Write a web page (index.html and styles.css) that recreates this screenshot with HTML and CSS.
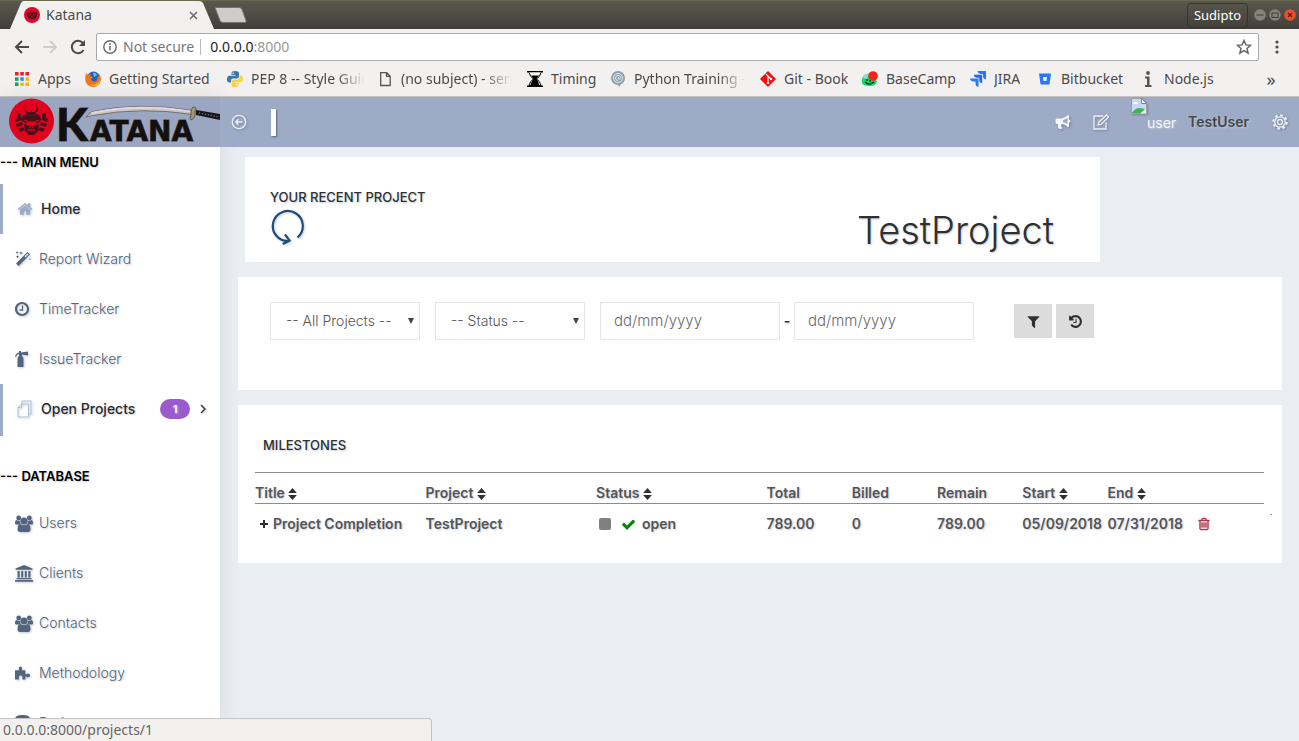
FILE: index.html
```html
<!DOCTYPE html>
<html lang="en">
<head>
<meta charset="utf-8">
<title>Katana</title>
<link rel="stylesheet" href="styles.css">
</head>
<body>
<svg class="defs" aria-hidden="true">
  <defs>
    <symbol id="sort" viewBox="0 0 8 11"><path d="M4 0 8 4.500H0zM0 6.500h8L4 11z"/></symbol>
    <symbol id="users" viewBox="0 0 18 17"><circle cx="3.700" cy="3" r="2.400"/><circle cx="14.300" cy="3" r="2.400"/><path d="M0 8.500Q0 5 1.500 5q2 1.500 4 .8Q4.500 8 6 9.600H1.500Q0 9.600 0 8.500zM18 8.500Q18 5 16.500 5q-2 1.500-4 .8Q13.500 8 12 9.600h4.500q1.500 0 1.500-1.100z"/><circle cx="9" cy="6" r="3.500"/><path d="M5.500 9q3.500 2.600 7 0 3 .6 3 5 0 3-2.500 3H5q-2.500 0-2.500-3 0-4.400 3-5z"/></symbol>
  </defs>
</svg>

<header class="browser">
  <div class="tabstrip">
    <div class="tab">
      <svg class="tab-shape" viewBox="0 0 206 28" preserveAspectRatio="none"><path d="M0 28L11 2q1-2 3-2h175q3 0 4 2l11 26z" fill="#f2f1f0"/></svg>
      <svg class="favicon" viewBox="0 0 16 16"><circle cx="8" cy="8" r="8" fill="#e2062c"/><path d="M3 5l2 1 1-2 2 2 2-2 1 2 2-1v4l-2 3H5L3 9z" fill="#5a1020"/><path d="M5 8h2M9 8h2M7 10h2" stroke="#e2062c"/></svg>
      <span class="tab-title">Katana</span>
      <button class="tab-close" aria-label="Close tab"><svg viewBox="0 0 9 9"><path d="M1 1l7 7M8 1 1 8" stroke="#6b6b6b" stroke-width="1.500"/></svg></button>
    </div>
    <button class="newtab" aria-label="New tab"><svg viewBox="0 0 33 16"><path d="M1 .5h24q2 0 3 2l4 11q.5 2-1 2H9q-2 0-3-2z" fill="#cdcccb" stroke="#76756f"/></svg></button>
    <div class="window-tools">
      <button class="profile">Sudipto</button>
      <svg class="winbtn" viewBox="0 0 12 12"><circle cx="6" cy="6" r="5.800" fill="#85837b"/><path d="M2.500 6h7" stroke="#3d3c37"/></svg>
      <svg class="winbtn" viewBox="0 0 12 12"><circle cx="6" cy="6" r="5.800" fill="#85837b"/><rect x="3" y="4" width="6" height="4.500" fill="none" stroke="#3d3c37"/></svg>
      <svg class="winbtn" viewBox="0 0 12 12"><circle cx="6" cy="6" r="5.800" fill="#ef5029"/><path d="M4 4l4 4M8 4l-4 4" stroke="#54200f" stroke-width="1.200"/></svg>
    </div>
  </div>
  <div class="toolbar">
    <button aria-label="Back"><svg viewBox="0 0 16 16"><path d="M15 8H2M8 2 2 8l6 6" fill="none" stroke="#4b4b4b" stroke-width="2"/></svg></button>
    <button aria-label="Forward"><svg viewBox="0 0 16 16"><path d="M1 8h13M8 2l6 6-6 6" fill="none" stroke="#cfcecd" stroke-width="2"/></svg></button>
    <button aria-label="Reload"><svg viewBox="0 0 16 16"><path d="M13.500 11A6.200 6.200 0 1 1 12.800 4" fill="none" stroke="#4b4b4b" stroke-width="2"/><path d="M15 1v6H9z" fill="#4b4b4b"/></svg></button>
    <div class="address">
      <svg viewBox="0 0 14 14"><circle cx="7" cy="7" r="6.200" fill="none" stroke="#666" stroke-width="1.400"/><path d="M7 6v4.500M7 3.300v1.600" stroke="#666" stroke-width="1.500"/></svg>
      <span class="secure">Not secure</span>
      <span class="url">0.0.0.0<em>:8000</em></span>
      <svg class="star" viewBox="0 0 16 16"><path d="M8 1.500l1.900 4.400 4.700.4-3.600 3.100 1.100 4.700L8 11.600l-4.100 2.500L5 9.400 1.400 6.300l4.700-.4z" fill="none" stroke="#666" stroke-width="1.500"/></svg>
    </div>
    <button class="more" aria-label="Menu"><svg viewBox="0 0 16 16"><circle cx="8" cy="3" r="1.600"/><circle cx="8" cy="8" r="1.600"/><circle cx="8" cy="13" r="1.600"/></svg></button>
  </div>
  <nav class="bookmarks">
    <a href="#"><svg viewBox="0 0 16 16"><path d="M1 1h3.500v3.500H1zM6.300 1h3.500v3.500H6.300zM11.500 1H15v3.500h-3.500z" fill="#ea1c24"/><path d="M1 6.300h3.500v3.500H1z" fill="#10a35a"/><path d="M6.300 6.300h3.500v3.500H6.300z" fill="#3b82f6"/><path d="M11.500 6.300H15v3.500h-3.500zM6.300 11.500h3.500V15H6.300zM11.500 11.500H15V15h-3.500z" fill="#f6b80c"/><path d="M1 11.500h3.500V15H1z" fill="#10a35a"/></svg><span>Apps</span></a>
    <a href="#"><svg viewBox="0 0 16 16"><circle cx="8.500" cy="7" r="6.500" fill="#1f64b8"/><path d="M8 2q3-1 4 2L9 6z" fill="#57c4e8"/><path d="M1 2l2 2q1-1 3-1L5 5l3 1-2 2q1 3 4 2.500 3-1 2-4 2 0 2-4 3 4 1.500 8A8 8 0 0 1 8 16 8 8 0 0 1 .3 9Q0 5 1 2z" fill="#f0731e"/><path d="M14 3q3 5-1 9-4 3-9 1 5 4 9 1 4-5 1-11z" fill="#fcc229"/></svg><span>Getting Started</span></a>
    <a href="#"><svg viewBox="0 0 16 16"><path d="M8 0Q4.500 0 4.500 2v2H8.500v.7H2.500Q0 5 0 8.200T2.300 11.500H4V9.500q0-2 2-2h4q2 0 2-2V2Q12 0 8 0z" fill="#3b76a8"/><path d="M8.200 16q3.600 0 3.600-2v-2H7.600v-.7h6Q16 11 16 7.800T13.700 4.500H12.500v2q0 2-2 2h-4q-2 0-2 2V14q0 2 3.700 2z" fill="#ffd33f"/><circle cx="6.200" cy="2.200" r=".8" fill="#fff"/><circle cx="10" cy="13.800" r=".8" fill="#fff"/></svg><span>PEP 8 -- Style Guide</span></a>
    <a href="#"><svg viewBox="0 0 16 16"><path d="M3.700 1.700h6l3.500 3.500v9.300H3.700zM9.500 1.700v3.700h3.700" fill="none" stroke="#555" stroke-width="1.300"/></svg><span>(no subject) - sen</span></a>
    <a href="#"><svg viewBox="0 0 16 16"><path d="M0 0h16v1.500H0zM0 14.500h16V16H0z"/><path d="M2 1.500Q3 6 6.500 8 3 10 2 14.500h12Q13 10 9.500 8 13 6 14 1.500" fill="#fff" stroke="#000"/><path d="M4 4.500h8L9.500 8q2 1.500 2.500 6H3.500Q5 9 6.500 8z"/></svg><span>Timing</span></a>
    <a href="#"><svg viewBox="0 0 16 16"><path d="M8 0a7 7 0 0 1 3 13.300L9 16l-1-2A7 7 0 0 1 8 0z" fill="#8fa5ae"/><circle cx="8" cy="7" r="4.500" fill="none" stroke="#e3eaed"/><path d="M8 9.500A2.500 2.500 0 1 1 10.500 7Q10 9 8.500 8V6" fill="none" stroke="#e3eaed"/></svg><span>Python Training -</span></a>
    <a href="#"><svg viewBox="0 0 16 16"><path d="M8 0l8 8-8 8-8-8z" fill="#f40c0c"/><path d="M6 3l2 2v7M8 5l3 3" fill="none" stroke="#fff" stroke-width="1.200"/><circle cx="8" cy="12" r="1.300" fill="#fff"/><circle cx="11" cy="8" r="1.300" fill="#fff"/></svg><span>Git - Book</span></a>
    <a href="#"><svg viewBox="0 0 16 16"><path d="M0 8q2-6 8-5l7 7q-1 5-7 5-7 0-8-3z" fill="#10d96b"/><path d="M1 7q2-5 6-4L5 8z" fill="#8adfd2"/><circle cx="11" cy="5" r="4.800" fill="#f52418"/><path d="M3 11q4 4 9 0M5 8v2M8 9v2" fill="none" stroke="#09331b" stroke-width="1.300"/></svg><span>BaseCamp</span></a>
    <a href="#"><svg viewBox="0 0 16 16"><path d="M7.500 0H16v8.500Q13 8 13 5V3h-2Q8 3 7.500 0z" fill="#2878ff"/><path d="M3.800 3.800h8.400v8.400q-3-.5-3-3.500V6.800h-2q-3 0-3.400-3z" fill="#2068ed"/><path d="M0 7.500h8.500V16q-3-.5-3-3.500v-2h-2Q.5 10.500 0 7.500z" fill="#2878ff"/></svg><span>JIRA</span></a>
    <a href="#"><svg viewBox="0 0 16 16"><path d="M2 2.500h12l-1.500 11h-9z" fill="#2878ff"/><path d="M6 6h4l-.6 4H6.600z" fill="#fff"/></svg><span>Bitbucket</span></a>
    <a href="#"><svg viewBox="0 0 16 16"><circle cx="8" cy="2" r="1.900" fill="#555"/><path d="M5 5.500H9.500v8.500h2v2H5v-2h2V7.500H5z" fill="#555"/></svg><span>Node.js</span></a>
    <button aria-label="More bookmarks">»</button>
  </nav>
</header>

<div class="app">
  <aside class="side">
    <a class="logo" href="#" aria-label="Katana">
      <svg viewBox="0 0 220 50">
        <circle cx="31.500" cy="24" r="22.500" fill="#e1021f"/>
        <g fill="#4a1119">
          <path d="M26 8q-3 5 1 9l4 2 4-2q5-4 1-10 2 6-2 8h-6q-4-2-2-7z"/>
          <path d="M31.500 14l2 4h-4zM23 18l5-1 3.500 2 4-2 4 1 2 5-4 3-6-2-6 2-5-3z"/>
          <path d="M17 16l4 1v3l-4 2zM46 16l-4 1v3l4 2zM15 22l6-2v3l-5 2zM48 22l-6-2v3l5 2zM16 27l6-2 1 3-6 2zM47 27l-6-2-1 3 6 2zM18 32l5-2 2 3-5 2zM45 32l-5-2-2 3 5 2z"/>
          <path d="M24 27l6 2h3l6-2-1 7-4 4h-5l-4-4z"/>
        </g>
        <path d="M24 23l5 2M39 23l-5 2M28 33h7M30 29v2M33 29v2" stroke="#e1021f" stroke-width="1.300"/>
        <text class="logo-k" x="56" y="44">K</text>
        <text class="logo-rest" x="90" y="44">ATANA</text>
        <path d="M86 20l6-5.500q45-10 101-1v4q-52-8-100 1z" fill="#cdc8b4" stroke="#655e6b" stroke-width=".8"/>
        <path d="M92 15q48-10 101-1v1.500Q140 7 91 17z" fill="#ded7ef"/>
        <path d="M193 10q5 0 2 5 1 6-4 8-2-1 0-5-1-6 2-8z" fill="#9c9877" stroke="#4c4a3c" stroke-width=".8"/>
        <path d="M196 13l24 4v6l-24-5z" fill="#17171b"/>
        <path d="M199 16l20 4" stroke="#8c8f9c" stroke-width="1.200" stroke-dasharray="1 2"/>
      </svg>
    </a>
    <nav class="menu">
      <h2>--- MAIN MENU</h2>
      <a class="item active" href="#"><svg class="pale" viewBox="0 0 1792 1792"><path d="M1472 992v480q0 26-19 45t-45 19h-384v-384h-256v384h-384q-26 0-45-19t-19-45v-480q0-1 .5-3t.5-3l575-474 575 474q1 2 1 6zm223-69l-62 74q-8 9-21 11h-3q-13 0-21-7l-692-577-692 577q-12 8-24 7-13-2-21-11l-62-74q-8-10-7-23.500t11-21.500l719-599q32-26 76-26t76 26l244 204v-195q0-14 9-23t23-9h192q14 0 23 9t9 23v408l219 182q10 8 11 21.500t-7 23.500z"/></svg><span>Home</span></a>
      <a class="item" href="#"><svg viewBox="0 0 16 16"><path d="M12.500 1L15 3.500 3.500 15 1 12.500zM12.500 2.500L9.500 5.500l1 1 3-3z" fill-rule="evenodd"/><path d="M6 0l.5 1.500L8 2l-1.500.5L6 4l-.5-1.500L4 2l1.500-.5zM2 0l.4 1 .9.500-.9.400L2 3l-.4-1.100-1-.4 1-.5zM2.500 4l.5 1.200 1.200.5L3 6.200l-.5 1.200L2 6.200.8 5.700 2 5.200zM15 7l.3.800.7.400-.7.300L15 9.300l-.3-.8-.8-.3.800-.4z"/></svg><span>Report Wizard</span></a>
      <a class="item" href="#"><svg viewBox="0 0 16 16"><circle cx="7" cy="8" r="6" fill="none" stroke="#52657d" stroke-width="2.200"/><path d="M7.500 4.500V9h-3" fill="none" stroke="#52657d" stroke-width="1.300"/></svg><span>TimeTracker</span></a>
      <a class="item" href="#"><svg viewBox="0 0 16 16"><path d="M4 0h2v1.500l7-1v4L7 3.500V5q1.500 1 1.500 3v8h-6V8Q2.500 6 4 5V3Q2 3 1 6L0 5.500Q1 2 4 1.500z"/></svg><span>IssueTracker</span></a>
      <a class="item active tall" href="#"><svg class="copy" viewBox="0 0 16 18"><path d="M5 4V1h9v13h-2.500M4.500 4H11.500v13H1V7.500zM4.500 4v3.500H1" fill="none" stroke="#afbfd4"/></svg><span>Open Projects</span><b class="badge">1</b><svg class="chev" viewBox="0 0 6 10"><path d="M1 1l4 4-4 4" fill="none" stroke="#333" stroke-width="1.400"/></svg></a>
      <h2 class="second">--- DATABASE</h2>
      <a class="item" href="#"><svg class="big"><use href="#users"/></svg><span>Users</span></a>
      <a class="item" href="#"><svg class="big" viewBox="0 0 18 17"><path d="M9 0l8.500 3.500v1.300H.5V3.500zM2.500 6h2.200v6.500H2.500zM6.200 6h2v6.500h-2zM9.800 6h2v6.500h-2zM13.300 6h2.200v6.500h-2.200zM1.500 13h15v1.300h-15zM0 15h18v1.700H0z"/></svg><span>Clients</span></a>
      <a class="item" href="#"><svg class="big"><use href="#users"/></svg><span>Contacts</span></a>
      <a class="item" href="#"><svg viewBox="0 0 17 16"><path d="M0 5h4.500Q3 1.500 5.700 1 8.500 1.500 7 5h4v4q1 1 2-.3 3-.5 3 1.800t-3 2q-1-1.500-2-.5v3H7.500q1.500-4-1.500-4.300T4.500 15H0z"/></svg><span>Methodology</span></a>
      <a class="item" href="#"><svg viewBox="0 0 16 16"><path d="M0 4q0-4 7.500-4T15 4v8q0 4-7.500 4T0 12z"/></svg><span>Projects</span></a>
    </nav>
  </aside>

  <div class="content">
    <header class="topbar">
      <button aria-label="Collapse menu"><svg viewBox="0 0 16 16"><circle cx="8" cy="8" r="6.700" fill="none" stroke="#edf1f8" stroke-width="1.300"/><path d="M11.500 8H5M7.500 5.300 4.800 8l2.700 2.700" fill="none" stroke="#edf1f8" stroke-width="1.500"/></svg></button>
      <span class="marker"></span>
      <div class="user-tools">
        <button aria-label="Announcements"><svg viewBox="0 0 16 16"><path d="M13 1q1 0 1 1v3.500q1.500 0 1.500 1.500T14 8.500V12q0 1-1 1-3-3-6-3-1.500 1.500-.5 3l1 1q-1 1.500-4 .5Q2.500 12 3 10H2Q.5 10 .5 8.500V6Q.5 4.500 2 4.500h5Q10 4 13 1z" fill="#f5f8fc"/><path d="M8 6q2.500-.5 4.500-2.300v6.500Q10.500 8.700 8 8.300z" fill="#9eabc6"/></svg></button>
        <button aria-label="Compose"><svg viewBox="0 0 16 16"><path d="M10 2H1v13h12V8M6 8l7.500-7 2 2L8 10.500 5 11z" fill="none" stroke="#edf1f8" stroke-width="1.300"/></svg></button>
        <a class="user" href="#">
          <span class="avatar"><svg viewBox="0 0 16 16"><path d="M.5.500h10l5 5v10H.5z" fill="#c5d8f5" stroke="#a0a0a0"/><path d="M10.500.5v5h5z" fill="#fff" stroke="#888"/><path d="M2 6q1-3 3-2 2 0 2 2z" fill="#fff"/><path d="M1 15q5-8 14-3v3z" fill="#3ab54a"/><path d="M9 15.500l6-5v5z" fill="#e7edf5"/></svg><span>user</span></span>
          <strong>TestUser</strong>
        </a>
        <button aria-label="Settings"><svg viewBox="0 0 16 16"><circle cx="8" cy="8" r="2.500" fill="none" stroke="#edf1f8" stroke-width="1.300"/><circle cx="8" cy="8" r="5.200" fill="none" stroke="#edf1f8" stroke-width="1.300"/><circle cx="8" cy="8" r="6.700" fill="none" stroke="#edf1f8" stroke-width="2" stroke-dasharray="2.630 2.630"/></svg></button>
      </div>
    </header>

    <main>
      <section class="card recent">
        <div>
          <h3>YOUR RECENT PROJECT</h3>
          <svg class="cycle" viewBox="0 0 34 38"><path d="M26.500 29.500A15 15 0 1 0 18 33" fill="none" stroke="#1f4e79" stroke-width="2.200"/><path d="M14 26.500l4.500 6-6.800 3.500" fill="none" stroke="#1f4e79" stroke-width="2.200"/></svg>
        </div>
        <h1>TestProject</h1>
      </section>

      <form class="card filters">
        <label class="pick"><select aria-label="Project"><option>-- All Projects --</option></select></label>
        <label class="pick"><select aria-label="Status"><option>-- Status --</option></select></label>
        <div class="range">
          <input type="text" aria-label="From date" placeholder="dd/mm/yyyy">
          <span>-</span>
          <input type="text" aria-label="To date" placeholder="dd/mm/yyyy">
        </div>
        <div class="actions">
          <button type="button" aria-label="Filter"><svg viewBox="0 0 1792 1792"><path d="M1595 295q17 41-14 70l-493 493v742q0 42-39 59-13 5-25 5-27 0-45-19l-256-256q-19-19-19-45v-486l-493-493q-31-29-14-70 17-39 59-39h1280q42 0 59 39z"/></svg></button>
          <button type="button" aria-label="Reset"><svg viewBox="0 0 1792 1792"><path d="M1664 896q0 156-61 298t-164 245-245 164-298 61q-172 0-327-72.500t-264-204.500q-7-10-6.500-22.500t8.500-20.500l137-138q10-9 25-9 16 2 23 12 73 95 179 147t225 52q104 0 198.500-40.500t163.500-109.500 109.500-163.500 40.500-198.500-40.500-198.500-109.500-163.500-163.500-109.500-198.500-40.500q-98 0-188 35.500t-160 101.500l137 138q31 30 14 69-17 40-59 40h-448q-26 0-45-19t-19-45v-448q0-42 40-59 39-17 69 14l130 129q107-101 244.500-156.500t284.500-55.500q156 0 298 61t245 164 164 245 61 298zm-640-288v448q0 14-9 23t-23 9h-320q-14 0-23-9t-9-23v-64q0-14 9-23t23-9h224v-352q0-14 9-23t23-9h64q14 0 23 9t9 23z"/></svg></button>
        </div>
      </form>

      <section class="card milestones">
        <h3>MILESTONES</h3>
        <table>
          <thead>
            <tr>
              <th class="wide">Title <svg class="sort"><use href="#sort"/></svg></th>
              <th class="wide">Project <svg class="sort"><use href="#sort"/></svg></th>
              <th class="wide">Status <svg class="sort"><use href="#sort"/></svg></th>
              <th class="slim">Total</th>
              <th class="slim">Billed</th>
              <th class="slim">Remain</th>
              <th class="slim">Start <svg class="sort"><use href="#sort"/></svg></th>
              <th class="slim">End <svg class="sort"><use href="#sort"/></svg></th>
              <th></th>
            </tr>
          </thead>
          <tbody>
            <tr>
              <td class="title"><svg class="plus" viewBox="0 0 8 8"><path d="M3 0h2v3h3v2H5v3H3V5H0V3h3z"/></svg>Project Completion</td>
              <td>TestProject</td>
              <td><div class="state"><i class="square"></i><svg class="check" viewBox="0 0 1792 1792"><path d="M1671 566q0 40-28 68l-724 724-136 136q-28 28-68 28t-68-28l-136-136-362-362q-28-28-28-68t28-68l136-136q28-28 68-28t68 28l294 295 656-657q28-28 68-28t68 28l136 136q28 28 28 68z"/></svg>open</div></td>
              <td>789.00</td>
              <td>0</td>
              <td>789.00</td>
              <td>05/09/2018</td>
              <td>07/31/2018</td>
              <td class="remove"><button aria-label="Delete milestone"><svg viewBox="0 0 1792 1792"><path d="M704 736v576q0 14-9 23t-23 9h-64q-14 0-23-9t-9-23v-576q0-14 9-23t23-9h64q14 0 23 9t9 23zm256 0v576q0 14-9 23t-23 9h-64q-14 0-23-9t-9-23v-576q0-14 9-23t23-9h64q14 0 23 9t9 23zm256 0v576q0 14-9 23t-23 9h-64q-14 0-23-9t-9-23v-576q0-14 9-23t23-9h64q14 0 23 9t9 23zm128 724v-948h-896v948q0 22 7 40.500t14.500 27 10.500 8.500h832q3 0 10.500-8.500t14.500-27 7-40.500zm-672-1076h448l-48-117q-7-9-17-11h-317q-10 2-17 11zm928 32v64q0 14-9 23t-23 9h-96v948q0 83-47 143.500t-113 60.500h-832q-66 0-113-58.500t-47-141.500v-952h-96q-14 0-23-9t-9-23v-64q0-14 9-23t23-9h309l70-167q15-37 54-63t79-26h320q40 0 79 26t54 63l70 167h309q14 0 23 9t9 23z"/></svg></button></td>
            </tr>
          </tbody>
        </table>
      </section>
    </main>
  </div>
</div>
<div class="status">0.0.0.0:8000/projects/1</div>
</body>
</html>
```
FILE: styles.css
```css
* { box-sizing: border-box; }
body {
  margin: 0;
  height: 100vh;
  overflow: hidden;
  display: flex;
  flex-direction: column;
  font: 400 14px/20px Inter, "Open Sans", sans-serif;
  color: #303030;
  background: #eaeef3;
}
button { border: 0; padding: 0; margin: 0; background: none; font: inherit; color: inherit; display: flex; align-items: center; justify-content: center; }
a { color: inherit; text-decoration: none; }
svg { display: block; flex: none; width: 16px; height: 16px; }
h1, h2, h3 { margin: 0; }
.defs { position: absolute; width: 0; height: 0; }

/* Browser frame */
.browser { flex: none; font-family: "Noto Sans", sans-serif; color: #4b4b4b; background: #f2f1f0; border-bottom: 1px solid #c4c3c2; }
.tabstrip { height: 29px; display: flex; align-items: center; padding: 0 3px 0 10px; background: linear-gradient(#5a584d, #403f3a); border-top: 1px solid #68674f; }
.tab { position: relative; width: 204px; height: 28px; display: flex; align-items: center; padding: 0 16px 0 14px; }
.tab-shape { position: absolute; left: 0; top: 0; width: 206px; height: 28px; }
.favicon, .tab-title, .tab-close { position: relative; }
.tab-title { flex: 1; margin-left: 6px; }
.tab-close svg { width: 9px; height: 9px; }
.newtab svg { width: 33px; height: 16px; }
.window-tools { margin-left: auto; display: flex; align-items: center; gap: 3px; }
.profile { height: 25px; padding: 0 6px; margin-right: 3px; border: 1px solid #35342f; border-radius: 4px; font-size: 13px; color: #fff; }
.winbtn { width: 12px; height: 12px; }
.toolbar { height: 35px; display: flex; align-items: center; gap: 12px; padding: 1px 14px 0 14px; }
.toolbar .more { margin: 0 0 0 -2px; fill: #4b4b4b; }
.address { flex: 1; height: 28px; margin-left: -2px; display: flex; align-items: center; padding: 0 6px; background: #fff; border: 1px solid #a9a9a9; border-radius: 2px; }
.address svg { width: 14px; height: 14px; }
.address .star { width: 16px; height: 16px; margin-left: auto; }
.secure { margin-left: 6px; padding-right: 6px; line-height: 16px; color: #757575; border-right: 1px solid #bbb; }
.url { margin-left: 9px; color: #222; }
.url em { font-style: normal; color: #999; }
.bookmarks { height: 32px; display: grid; grid-template-columns: 71px 142px 150px 150px 83px 150px 102px 108px 67px 103px 1fr 20px; align-items: center; padding: 0 18px 2px 14px; }
.bookmarks a { display: flex; gap: 8px; min-width: 0; padding-right: 12px; white-space: nowrap; }
.bookmarks a span { overflow: hidden; line-height: 20px; }
.bookmarks a svg { margin-top: 2px; }
.bookmarks a:nth-child(3) span, .bookmarks a:nth-child(4) span, .bookmarks a:nth-child(6) span { -webkit-mask-image: linear-gradient(90deg, #000 75%, transparent); mask-image: linear-gradient(90deg, #000 75%, transparent); }
.bookmarks button { font-size: 18px; }

/* Application */
.app { flex: 1; min-height: 0; display: flex; text-shadow: 1px 1px 2px #c3cad6; }
.side { flex: none; width: 220px; background: #fff; box-shadow: 1px 0 20px rgba(0, 0, 0, .08); }
.logo { display: block; height: 50px; background: #9ba7c1; text-shadow: none; }
.logo svg { width: 220px; height: 50px; }
.logo text { font-weight: 900; fill: #12110f; stroke: #573b42; stroke-width: 1px; paint-order: stroke; }
.logo-k { font-family: Lato, sans-serif; font-size: 46px; }
.logo-rest { font-family: "DejaVu Sans", sans-serif; font-size: 28px; }
.menu h2 { height: 37px; padding-top: 5px; font-size: 13px; line-height: 20px; font-weight: 600; color: #000; }
.menu .second { height: 62px; padding-top: 30px; }
.item { height: 50px; display: flex; align-items: center; gap: 8px; padding-left: 15px; font-weight: 300; color: #54667a; }
.item svg { fill: #52657d; filter: drop-shadow(1px 1px 1px #c3cad6); }
.item .big { width: 18px; height: 17px; margin-right: -2px; }
.item .pale { fill: #9cabc8; }
.item.active { border-left: 3px solid #9eabc6; padding-left: 14px; font-weight: 500; color: #2b2b2b; }
.item.tall { height: 52px; padding-bottom: 2px; }
.item .copy { height: 18px; }
.badge { margin-left: auto; width: 30px; height: 20px; border-radius: 10px; background: #9b5bcd; color: #fff; font-size: 11px; line-height: 20px; font-weight: 600; text-align: center; }
.item .chev { width: 6px; height: 10px; margin: 0 14px 0 2px; }
.content { flex: 1; min-width: 0; }
.topbar { height: 50px; display: flex; align-items: center; padding: 0 11px; background: #9eabc6; }
.topbar svg { filter: drop-shadow(1px 1px 1px #77839c); }
.marker { width: 5px; height: 27px; margin-left: 24px; background: #fff; box-shadow: 1px 1px 2px #56617a; }
.user-tools { margin-left: auto; display: flex; align-items: center; gap: 22px; }
.user { display: flex; gap: 12px; margin: 0 1px 0 0; align-items: center; }
.avatar { display: flex; color: #f5f7fa; height: 48px; }
.avatar span { padding-top: 15px; line-height: 20px; }
.user strong { font-weight: 600; color: #45474c; }
main { display: flex; flex-direction: column; gap: 15px; padding: 10px 17px 15px 18px; }
.card { background: #fff; }
.recent { width: 81.900%; margin-left: 7px; height: 105px; padding: 30px 46px 14px 25px; display: flex; justify-content: space-between; }
h3 { font-size: 13px; line-height: 20px; font-weight: 500; }
.cycle { width: 34px; height: 38px; margin: 1px 0 0 1px; filter: drop-shadow(1px 1px 1px #c3cad6); }
h1 { font-size: 38px; line-height: 44px; font-weight: 300; padding-top: 21px; }
.filters { display: flex; align-items: flex-start; padding: 25px 32px 50px; }
.pick { position: relative; margin-right: 15px; }
.pick::after { content: ""; position: absolute; right: 6px; top: 16px; border: solid transparent; border-width: 6px 3px 0; border-top-color: #444; }
.pick select, .range input { height: 38px; border: 1px solid #e4e7ea; border-radius: 0; background: #fff; font: inherit; font-weight: 300; color: #565656; }
.pick select { display: block; width: 150px; padding: 0 15px; appearance: none; }
.range { display: flex; align-items: center; }
.range span { width: 14px; text-align: center; font-weight: 600; }
.range input { width: 180px; padding: 0 13px 2px; font-size: 15px; }
.range input::placeholder { color: #6a6a6a; opacity: 1; }
.actions { display: flex; gap: 4px; margin: 2px 0 0 40px; }
.actions button { width: 38px; height: 34px; background: #dcdcdc; }
.actions svg { width: 15px; height: 15px; fill: #303030; }
.milestones { position: relative; padding: 30px 18px 18px 17px; }
.milestones::after { content: ""; position: absolute; right: 10px; top: 109px; width: 1px; height: 1px; background: #777; }
.milestones h3 { margin: 0 0 17px 8px; font-size: 13px; }
table { width: 100%; table-layout: fixed; border-collapse: collapse; color: #555; font-weight: 600; white-space: nowrap; }
th, td { padding: 0; text-align: left; font-weight: 600; font-size: 14px; }
th { height: 31px; padding-top: 10px; line-height: 20px; border-top: 1px solid #8c8c8c; border-bottom: 1px solid #8c8c8c; }
td { height: 41px; line-height: 20px; }
.wide { width: 16.900%; }
.slim { width: 8.450%; }
.sort { display: inline-block; width: 9px; height: 12px; vertical-align: -2px; fill: #303030; }
.title { padding-left: 5px; }
.plus { display: inline-block; width: 8px; height: 8px; margin-right: 5px; vertical-align: 1px; fill: #303030; }
.state { display: flex; align-items: center; }
.square { width: 12px; height: 12px; margin: 0 10px 0 3px; border-radius: 2px; background: #808080; }
.check { margin-right: 6px; width: 15px; height: 15px; fill: #008a00; }
.remove { padding-left: 4px; }
.remove svg { width: 14px; height: 14px; fill: #b03a50; stroke: #b03a50; stroke-width: 60; }
.status { position: fixed; left: 0; bottom: 0; width: 432px; height: 23px; padding-left: 3px; font: 14px/22px "Noto Sans", sans-serif; color: #666; background: #f2f1f0; border: solid #c4c4c4; border-width: 1px 1px 0 0; border-top-right-radius: 4px; }
```
